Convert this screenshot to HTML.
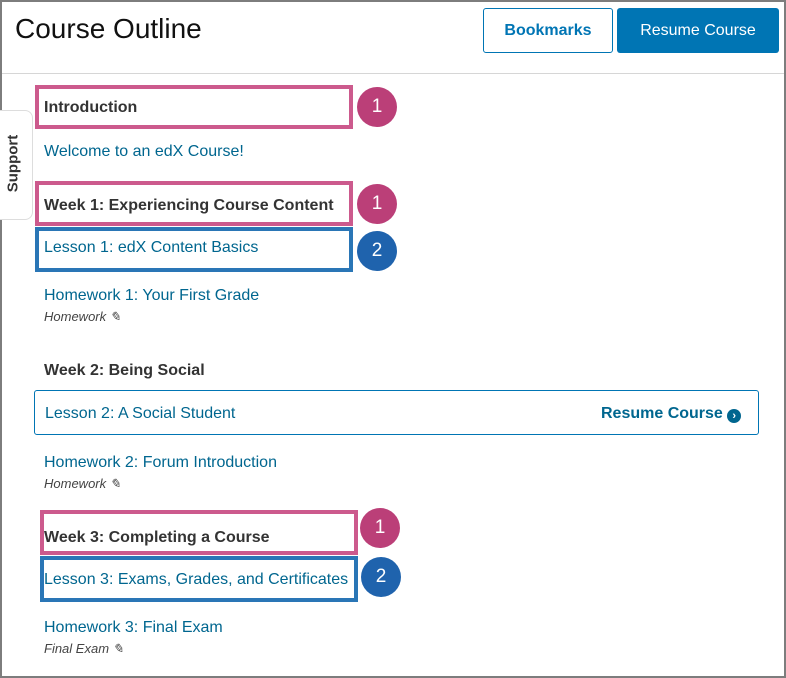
<!DOCTYPE html>
<html><head><style>
*{margin:0;padding:0;box-sizing:border-box}
body{width:786px;height:678px;position:relative;background:#fff;font-family:"Liberation Sans",sans-serif;overflow:hidden}
.frame{position:absolute;left:0;top:0;width:786px;height:678px;border:2px solid #7d7d7d}
.a{position:absolute;white-space:nowrap}
.link{color:#00668f;font-size:16px}
.bold{color:#333;font-weight:bold;font-size:16px}
.sub{color:#444;font-style:italic;font-size:13px}
.pk{position:absolute;border:4px solid #cc5a8d}
.bl{position:absolute;border:4px solid #2a76b6}
.c{position:absolute;width:40px;height:40px;border-radius:50%;color:#fff;font-size:19px;text-align:center;line-height:40px}
.c1{background:#bb3f78}.c2{background:#1f63ad}
</style></head><body>
<div class="frame"></div>
<div class="a" style="left:15px;top:13px;font-size:28px;color:#111">Course Outline</div>
<div class="a" style="left:483px;top:8px;width:130px;height:45px;border:1px solid #0075b4;border-radius:3px;color:#0075b4;font-size:16px;font-weight:bold;text-align:center;line-height:43px">Bookmarks</div>
<div class="a" style="left:617px;top:8px;width:162px;height:45px;background:#0075b4;border-radius:3px;color:#fff;font-size:16px;text-align:center;line-height:45px">Resume Course</div>
<div class="a" style="left:2px;top:73px;width:782px;height:1px;background:#d6d6d6"></div>
<div class="a" style="left:-4px;top:110px;width:37px;height:110px;border:1px solid #ddd;border-radius:0 8px 8px 0;background:#fff"></div>
<div class="a" style="left:-17px;top:155px;transform:rotate(-90deg);font-size:15px;font-weight:bold;color:#333;width:60px;text-align:center">Support</div>

<div class="pk" style="left:35px;top:85px;width:318px;height:44px"></div>
<div class="a bold" style="left:44px;top:99px">Introduction</div>
<div class="c c1" style="left:357px;top:87px">1</div>
<div class="a link" style="left:44px;top:143px">Welcome to an edX Course!</div>
<div class="pk" style="left:35px;top:181px;width:318px;height:45px"></div>
<div class="a bold" style="left:44px;top:197px">Week 1: Experiencing Course Content</div>
<div class="c c1" style="left:357px;top:184px">1</div>
<div class="bl" style="left:35px;top:227px;width:318px;height:45px"></div>
<div class="a link" style="left:44px;top:239px">Lesson 1: edX Content Basics</div>
<div class="c c2" style="left:357px;top:231px">2</div>
<div class="a link" style="left:44px;top:287px">Homework 1: Your First Grade</div>
<div class="a sub" style="left:44px;top:309px">Homework &#9998;</div>
<div class="a bold" style="left:44px;top:362px">Week 2: Being Social</div>
<div class="a" style="left:34px;top:390px;width:725px;height:45px;border:1px solid #0075b4;border-radius:3px"></div>
<div class="a link" style="left:45px;top:405px">Lesson 2: A Social Student</div>
<div class="a" style="left:601px;top:405px;font-size:16px;font-weight:bold;color:#00668f">Resume Course <span style="display:inline-block;width:14px;height:14px;border-radius:50%;background:#00668f;color:#fff;font-size:11px;line-height:14px;text-align:center;vertical-align:-1px">&#8250;</span></div>
<div class="a link" style="left:44px;top:454px">Homework 2: Forum Introduction</div>
<div class="a sub" style="left:44px;top:476px">Homework &#9998;</div>
<div class="pk" style="left:40px;top:510px;width:318px;height:45px"></div>
<div class="a bold" style="left:44px;top:529px">Week 3: Completing a Course</div>
<div class="c c1" style="left:360px;top:508px">1</div>
<div class="bl" style="left:40px;top:556px;width:318px;height:46px"></div>
<div class="a link" style="left:44px;top:571px">Lesson 3: Exams, Grades, and Certificates</div>
<div class="c c2" style="left:361px;top:557px">2</div>
<div class="a link" style="left:44px;top:619px">Homework 3: Final Exam</div>
<div class="a sub" style="left:44px;top:641px">Final Exam &#9998;</div>
</body></html>
